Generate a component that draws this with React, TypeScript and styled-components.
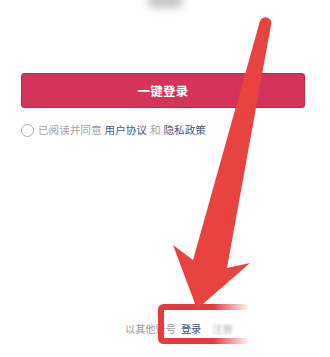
import React from "react";
import styled, { createGlobalStyle } from "styled-components";

const Global = createGlobalStyle`
  html, body { margin: 0; padding: 0; background: #fff; }
  body { font-family: "Noto Sans CJK SC", "Noto Sans", sans-serif; }
`;

const Page = styled.div`
  position: relative;
  width: 330px;
  height: 357px;
  overflow: hidden;
  display: flex;
  flex-direction: column;
  align-items: stretch;
  background: #fff;
`;

const Logo = styled.div`
  align-self: center;
  width: 36px;
  height: 14px;
  margin-top: -6px;
  border-radius: 8px;
  background: #c4c4c4;
  filter: blur(4px);
`;

const LoginButton = styled.button`
  margin: 65px 25px 0 21px;
  height: 35px;
  border: 1px solid #bd2a4c;
  border-radius: 3px;
  background: #d5345a;
  color: #fff;
  font-family: inherit;
  font-size: 12.5px;
  font-weight: 700;
  letter-spacing: 0.3px;
  display: flex;
  align-items: center;
  justify-content: center;
  padding: 0;
`;

const AgreeRow = styled.div`
  display: flex;
  align-items: center;
  margin: 15px 0 0 21px;
  font-size: 10.6px;
  color: #a3a3a3;
  gap: 3px;
  line-height: 14px;
`;

const Radio = styled.span`
  width: 11px;
  height: 11px;
  border: 1px solid #a9a9a9;
  border-radius: 50%;
  margin-right: 1px;
`;

const Link = styled.span`
  color: #4a5a7e;
`;

const Footer = styled.div`
  margin-top: auto;
  margin-bottom: 21px;
  display: flex;
  align-items: center;
  justify-content: flex-start;
  padding-left: 125px;
  font-size: 10.2px;
  line-height: 14px;
  color: #9a9a9a;
  gap: 5px;
`;

const FooterLink = styled.span`
  color: #3e4d6e;
`;

const Blurred = styled.span`
  color: #b5b5b5;
  filter: blur(1.1px);
  margin-left: 6px;
`;

const Overlay = styled.svg`
  position: absolute;
  left: 0;
  top: 0;
  pointer-events: none;
`;

export default function App() {
  return (
    <>
      <Global />
      <Page>
        <Logo />
        <LoginButton>一键登录</LoginButton>
        <AgreeRow>
          <Radio />
          <span>已阅读并同意</span>
          <Link>用户协议</Link>
          <span>和</span>
          <Link>隐私政策</Link>
        </AgreeRow>
        <Footer>
          <span>以其他账号</span>
          <FooterLink>登录</FooterLink>
          <Blurred>注册</Blurred>
        </Footer>
        <Overlay width="330" height="357" viewBox="0 0 330 357">
          <defs>
            <linearGradient id="fade" x1="158" y1="0" x2="250" y2="0" gradientUnits="userSpaceOnUse">
              <stop offset="0.6" stopColor="#e43b3e" stopOpacity="1" />
              <stop offset="1" stopColor="#e43b3e" stopOpacity="0" />
            </linearGradient>
          </defs>
          <path
            d="M248 307 L164 307 Q161 307 161 310 L161 338 Q161 341 164 341 L248 341"
            fill="none"
            stroke="url(#fade)"
            strokeWidth="6"
            strokeLinejoin="round"
          />
          <circle cx="265.5" cy="23" r="5.8" fill="#e8433f" />
          <polygon
            points="259.7,22 271.3,23 227,268 250,263 197,309 173,245 193,260"
            fill="#e8433f"
            strokeLinejoin="round"
          />
        </Overlay>
      </Page>
    </>
  );
}
